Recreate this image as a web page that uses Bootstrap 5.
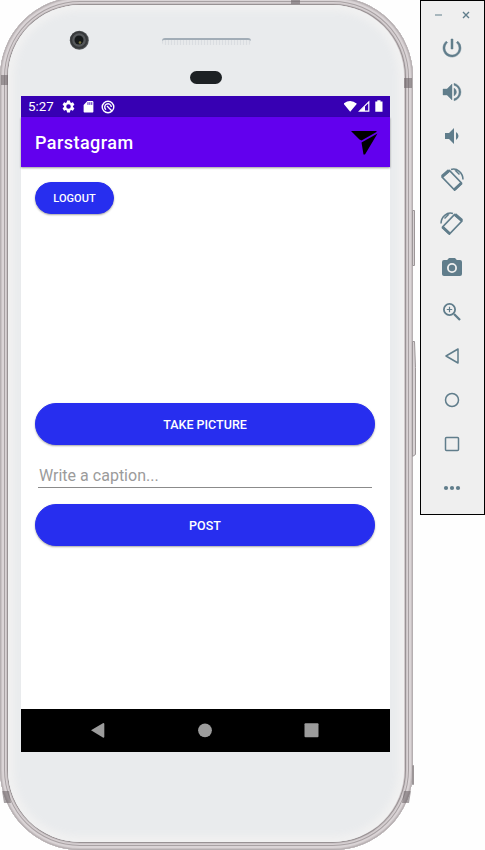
<!DOCTYPE html>
<html lang="en">
<head>
<meta charset="utf-8">
<meta name="viewport" content="width=device-width, initial-scale=1">
<title>Parstagram</title>
<link href="https://cdn.jsdelivr.net/npm/bootstrap@5.3.0/dist/css/bootstrap.min.css" rel="stylesheet">
<style>
  body { font-family: Roboto, sans-serif; height: 850px; background: #fefefe; }
  svg { display: block; flex: none; }
  .stage { width: 485px; height: 850px; }
  .handset { width: 413px; height: 853px; margin-top: -3px; padding: 8px 9px 8px 8px; border-radius: 80px;
    background: #d2cbcd;
    box-shadow: inset 0 0 0 1px #b5afb1, inset 0 0 0 2px #c9c2c4, inset 0 0 0 4px #dad4d6, inset 0 0 0 5px #a8a1a3, inset 0 0 0 6px #d8d2d4, inset 0 0 0 7px #cbc4c6, inset 0 0 0 8px #989294; }
  .face { height: 837px; border-radius: 72px; padding: 91px 14px 0 13px; background: #e9ebed; box-shadow: inset 0 0 7px 6px #f1f1f1; }
  .display-area { width: 369px; height: 656px; background: #fff; }
  .status { height: 21px; background: #3700b3; font-size: 13.3px; padding: 0 6px 0 7px; line-height: 21px; }
  .gear { margin-left: 7px; }
  .sdcard { margin-left: 6px; }
  .sync { margin-left: 6px; }
  .appbar { height: 50px; background: #6200ee; padding: 0 12px 0 14px; box-shadow: 0 1px 2px rgba(0,0,0,.4); }
  .title { font-size: 18px; font-weight: 500; letter-spacing: .45px; line-height: 22px; padding-top: 2px; }
  .content { padding: 15px 15px 0 14px; }
  .act { --bs-btn-bg: #272eef; --bs-btn-border-color: #272eef; --bs-btn-color: #fff; --bs-btn-hover-bg: #1c23d4; --bs-btn-hover-color: #fff;
    --bs-btn-font-weight: 500; --bs-btn-font-size: 12.5px; --bs-btn-padding-y: 0; height: 42px; line-height: 42px; box-shadow: 0 1px 2px rgba(0,0,0,.35); }
  .logout { --bs-btn-font-size: 11px; --bs-btn-padding-x: 0; width: 79px; height: 32px; line-height: 32px; letter-spacing: .05px; margin-bottom: 189px; }
  .caption { width: 334px; height: 24px; margin: 19px 0 16px 3px; border-bottom: 1px solid #8b8b8b; font-size: 16px; letter-spacing: .01px; padding: 0 0 1px 1px; line-height: 22px; }
  .caption::placeholder { color: #9b9b9b; opacity: 1; }
  .softkeys { height: 43px; background: #000; }
  .camera { left: 69px; top: 30px; }
  .speaker { left: 162px; top: 38px; width: 89px; height: 7px; border-top: 2px solid #a2adb7; border-radius: 3px; background: repeating-linear-gradient(90deg, #dadde1 0 1px, #e7e9eb 1px 3px); }
  .sensor { left: 190px; top: 71px; width: 32px; height: 13px; background: #1d2124; }
  .tools { width: 65px; height: 515px; margin-left: 7px; background: #efefef; border: 1px solid #000; color: #607d8b; padding: 8px 2px 0 0; }
  .tool { width: 24px; height: 24px; margin-bottom: 20px; }
  .tool:last-child { margin-bottom: 0; }
  .windowkeys { height: 12px; margin: 0 0 15px 2px; gap: 19px; }
</style>
<script src="https://cdn.jsdelivr.net/npm/bootstrap@5.3.0/dist/js/bootstrap.bundle.min.js"></script>
</head>
<body class="overflow-hidden">
<div class="stage position-relative d-flex align-items-start overflow-hidden">
  <main class="handset flex-shrink-0">
    <div class="face">
      <div class="display-area d-flex flex-column">
        <div class="status d-flex align-items-center text-white">
          <span>5:27</span>
          <svg class="gear" width="15" height="15" viewBox="0 0 24 24" fill="currentColor"><path d="M19.14 12.94c.04-.3.06-.61.06-.94 0-.32-.02-.64-.07-.94l2.03-1.58a.49.49 0 0 0 .12-.61l-1.92-3.32a.49.49 0 0 0-.59-.22l-2.39.96a7 7 0 0 0-1.62-.94l-.36-2.54A.48.48 0 0 0 13.920 2.400h-3.840c-.24 0-.43.17-.47.41l-.36 2.540c-.59.24-1.130.57-1.620.94l-2.390-.96a.48.48 0 0 0-.59.22L2.740 8.870a.47.47 0 0 0 .12.61l2.030 1.580a7 7 0 0 0-.02 1.880l-2.030 1.580a.49.49 0 0 0-.12.61l1.920 3.320c.12.22.37.29.59.22l2.390-.96c.5.38 1.030.7 1.620.94l.36 2.540c.05.24.24.41.48.41h3.840c.24 0 .44-.17.47-.41l.36-2.540a7 7 0 0 0 1.620-.94l2.390.96c.22.08.47 0 .59-.22l1.920-3.320a.47.47 0 0 0-.12-.61zM12 15.600a3.600 3.600 0 1 1 0-7.200 3.600 3.600 0 0 1 0 7.200z"/></svg>
          <svg class="sdcard" width="13" height="13" viewBox="0 0 24 24"><path fill="currentColor" d="M19 2H10L3 9v12c0 1 1 2 2 2h14c1 0 2-1 2-2V4c0-1-1-2-2-2z"/><path stroke="#3700b3" stroke-width="1.600" d="M11 4v5M14.500 4v5M18 4v5"/></svg>
          <svg class="sync" width="14" height="14" viewBox="0 0 14 14" fill="none" stroke="currentColor" stroke-width="1.400"><circle cx="7" cy="7" r="5.800"/><path d="M5 9.700A3.300 3.300 0 1 1 10.300 7M6 6l5 5"/></svg>
          <svg class="ms-auto" width="40" height="13" viewBox="0 0 40 13"><path fill="#fff" d="M-.5 3.700Q6.200-1.500 12.900 3.700L6.200 11.800zM31.300 1.500h2V.3h3.200v1.200h2v10.300h-7.200z"/><path fill="none" stroke="#fff" stroke-width="1.200" d="M15.500 11.200H24.800V1.900z"/><path fill="#fff" d="M16 11l5-5V11z"/></svg>
        </div>
        <header class="appbar d-flex align-items-center justify-content-between">
          <span class="title text-white">Parstagram</span>
          <svg width="28" height="26" viewBox="0 0 28 26"><path d="M1 2h25.500v1L11.500 11.500 9.500 10.500zM27.500 4.500L15 25.500h-1.500l-2-12z"/></svg>
        </header>
        <section class="content flex-grow-1">
          <button class="btn act logout rounded-pill d-block">LOGOUT</button>
          <button class="btn act rounded-pill w-100 d-block">TAKE PICTURE</button>
          <input class="caption form-control border-top-0 border-start-0 border-end-0 rounded-0 shadow-none" type="text" placeholder="Write a caption..." aria-label="Caption">
          <button class="btn act rounded-pill w-100 d-block">POST</button>
        </section>
        <nav class="softkeys">
          <svg width="369" height="43" viewBox="0 0 369 43" fill="#9c9c9c"><path d="M70 21.200l12.300-7.200q1 0 1 1v12.700q0 1-1 1z"/><circle cx="184" cy="21.300" r="6.900"/><rect x="283.500" y="14.200" width="14" height="14" rx="1"/></svg>
        </nav>
      </div>
    </div>
  </main>
  <aside class="tools flex-shrink-0 d-flex flex-column align-items-center">
    <div class="windowkeys flex-shrink-0 d-flex align-items-center">
      <svg width="8" height="8" viewBox="0 0 8 8"><path stroke="#91a4ad" stroke-width="1.500" d="M0 4h7"/></svg>
      <svg width="8" height="8" viewBox="0 0 8 8"><path stroke="#607d8b" stroke-width="1.400" d="M1 1l6 6M7 1L1 7"/></svg>
    </div>
    <svg class="tool" viewBox="0 0 24 24" fill="currentColor"><path d="M13 3h-2v10h2zm4.830 2.170l-1.420 1.420A6.900 6.900 0 0 1 19 12a7 7 0 1 1-11.420-5.420L6.170 5.170A9 9 0 1 0 21 12a8.900 8.900 0 0 0-3.170-6.830z" stroke="currentColor" stroke-width=".5"/></svg>
    <svg class="tool" viewBox="0 0 24 24" fill="currentColor"><path d="M3 9v6h4l5 5V4L7 9zm13.500 3A4.500 4.500 0 0 0 14 7.970v8.050A4.500 4.500 0 0 0 16.500 12zM14 3.230v2.060a7 7 0 0 1 0 13.420v2.060a9 9 0 0 0 0-17.540z" stroke="currentColor" stroke-width=".4"/></svg>
    <svg class="tool" viewBox="0 0 24 24" fill="currentColor"><path d="M5 9v6h4l5 5V4L9 9zm13.500 3A4.500 4.500 0 0 0 16 7.970v8.050A4.500 4.500 0 0 0 18.500 12z"/></svg>
    <svg class="tool overflow-visible" viewBox="0 0 24 24" fill="none" stroke="currentColor"><path stroke-width="1.800" stroke-linejoin="round" d="M2 9L9.500 2.500 21.500 15 14.500 22z"/><path stroke-width="3" d="M2 8.500L9 2.500M14.500 21.500L21.500 15"/><path stroke-width="1.500" d="M11 1.500C17 -.5 23 5 23 11.500M15 2l4.500 4.500"/></svg>
    <svg class="tool overflow-visible" viewBox="0 0 24 24" fill="none" stroke="currentColor"><path stroke-width="1.800" stroke-linejoin="round" d="M22 9L14.500 2.500 2.500 15 9.500 22z"/><path stroke-width="3" d="M22 8.500L15 2.500M9.500 21.500L2.500 15"/><path stroke-width="1.500" d="M13 1.500C7 -.5 1 5 1 11.500M9 2L4.500 6.500"/></svg>
    <svg class="tool" viewBox="0 0 24 24" fill="currentColor"><path fill-rule="evenodd" d="M9 2L7.170 4H4a2 2 0 0 0-2 2v12c0 1.100.9 2 2 2h16a2 2 0 0 0 2-2V6a2 2 0 0 0-2-2h-3.170L15 2zm3 5a5 5 0 1 1 0 10 5 5 0 0 1 0-10z"/><circle cx="12" cy="12" r="3.200"/></svg>
    <svg class="tool" viewBox="0 0 24 24" fill="none" stroke="currentColor"><circle cx="9.500" cy="9.500" r="5.600" stroke-width="1.800"/><path stroke-width="2.300" d="M14 14l6 6"/><path stroke-width="1.200" d="M9.500 6.800v5.400M6.800 9.500h5.400"/></svg>
    <svg class="tool" viewBox="0 0 24 24" fill="none" stroke="currentColor" stroke-width="1.500" stroke-linejoin="round"><path d="M6 12l12-7v14z"/></svg>
    <svg class="tool" viewBox="0 0 24 24" fill="none" stroke="currentColor" stroke-width="1.500"><circle cx="12" cy="12" r="6.500"/></svg>
    <svg class="tool" viewBox="0 0 24 24" fill="none" stroke="currentColor" stroke-width="1.500"><rect x="5.500" y="5.500" width="13" height="13" rx="1"/></svg>
    <svg class="tool" viewBox="0 0 24 24" fill="currentColor"><circle cx="6" cy="12" r="2.100"/><circle cx="12" cy="12" r="2.100"/><circle cx="18" cy="12" r="2.100"/></svg>
  </aside>

  <!-- hardware details laid over the handset body -->
  <svg class="camera position-absolute" width="20" height="20" viewBox="0 0 20 20"><circle cx="10.300" cy="10.300" r="9.500" fill="#55585b"/><circle cx="10" cy="10" r="7.800" fill="none" stroke="#37393b" stroke-width="2"/><circle cx="10" cy="10" r="4.500" fill="#151819"/><circle cx="11" cy="12.500" r="1.300" fill="#77723d"/></svg>
  <div class="speaker position-absolute"></div>
  <div class="sensor position-absolute rounded-pill"></div>
  <svg class="position-absolute top-0 start-0" width="420" height="850" viewBox="0 0 420 850">
    <g fill="#6f676b" fill-opacity=".6"><path d="M291 0h9v4h-9zM1 75h7v10H1zM404 78h8v10h-8zM2 791h7l2 12H4zM404 791h7l-2 12h-7z"/></g>
    <g fill="#d8d2d4" stroke="#9c9698"><path d="M412.500 210.500h2v55h-2zM412.500 341.500h2l1 26v87l-3 2zM412.500 765.500h1v19h-1z"/></g>
  </svg>
</div>
</body>
</html>
